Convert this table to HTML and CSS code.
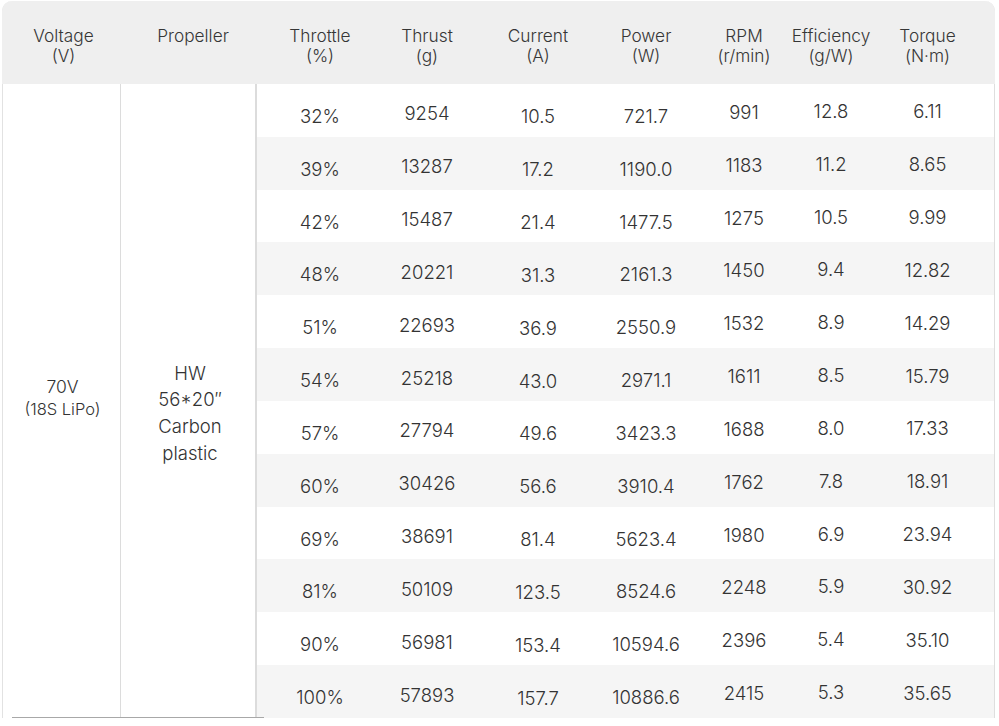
FILE: index.html
```html
<!DOCTYPE html>
<html>
<head>
<meta charset="utf-8">
<link rel="stylesheet" href="styles.css">
</head>
<body>
<div class="wrap">
  <div class="table">
    <div class="hbg"></div>
    <div class="h k1">Voltage<br>(V)</div>
    <div class="h k2">Propeller</div>
    <div class="h k3">Throttle<br>(%)</div>
    <div class="h k4">Thrust<br>(g)</div>
    <div class="h k5">Current<br>(A)</div>
    <div class="h k6">Power<br>(W)</div>
    <div class="h k7">RPM<br>(r/min)</div>
    <div class="h k8">Efficiency<br>(g/W)</div>
    <div class="h k9">Torque<br>(N·m)</div>

    <div class="volt"><span class="v1">70V</span><span class="v2">(18S LiPo)</span></div>
    <div class="prop">HW<br>56*20″<br>Carbon<br>plastic</div>

    <div class="c c1">32%</div><div class="c c2">9254</div><div class="c c3">10.5</div><div class="c c4">721.7</div><div class="c c5">991</div><div class="c c6">12.8</div><div class="c c7">6.11</div>
    <div class="c c1 s">39%</div><div class="c c2 s">13287</div><div class="c c3 s">17.2</div><div class="c c4 s">1190.0</div><div class="c c5 s">1183</div><div class="c c6 s">11.2</div><div class="c c7 s">8.65</div>
    <div class="c c1">42%</div><div class="c c2">15487</div><div class="c c3">21.4</div><div class="c c4">1477.5</div><div class="c c5">1275</div><div class="c c6">10.5</div><div class="c c7">9.99</div>
    <div class="c c1 s">48%</div><div class="c c2 s">20221</div><div class="c c3 s">31.3</div><div class="c c4 s">2161.3</div><div class="c c5 s">1450</div><div class="c c6 s">9.4</div><div class="c c7 s">12.82</div>
    <div class="c c1">51%</div><div class="c c2">22693</div><div class="c c3">36.9</div><div class="c c4">2550.9</div><div class="c c5">1532</div><div class="c c6">8.9</div><div class="c c7">14.29</div>
    <div class="c c1 s">54%</div><div class="c c2 s">25218</div><div class="c c3 s">43.0</div><div class="c c4 s">2971.1</div><div class="c c5 s">1611</div><div class="c c6 s">8.5</div><div class="c c7 s">15.79</div>
    <div class="c c1">57%</div><div class="c c2">27794</div><div class="c c3">49.6</div><div class="c c4">3423.3</div><div class="c c5">1688</div><div class="c c6">8.0</div><div class="c c7">17.33</div>
    <div class="c c1 s">60%</div><div class="c c2 s">30426</div><div class="c c3 s">56.6</div><div class="c c4 s">3910.4</div><div class="c c5 s">1762</div><div class="c c6 s">7.8</div><div class="c c7 s">18.91</div>
    <div class="c c1">69%</div><div class="c c2">38691</div><div class="c c3">81.4</div><div class="c c4">5623.4</div><div class="c c5">1980</div><div class="c c6">6.9</div><div class="c c7">23.94</div>
    <div class="c c1 s">81%</div><div class="c c2 s">50109</div><div class="c c3 s">123.5</div><div class="c c4 s">8524.6</div><div class="c c5 s">2248</div><div class="c c6 s">5.9</div><div class="c c7 s">30.92</div>
    <div class="c c1">90%</div><div class="c c2">56981</div><div class="c c3">153.4</div><div class="c c4">10594.6</div><div class="c c5">2396</div><div class="c c6">5.4</div><div class="c c7">35.10</div>
    <div class="c c1 s">100%</div><div class="c c2 s">57893</div><div class="c c3 s">157.7</div><div class="c c4 s">10886.6</div><div class="c c5 s">2415</div><div class="c c6 s">5.3</div><div class="c c7 s">35.65</div>
  </div>
</div>
</body>
</html>
```

FILE: styles.css
```css
html, body {
  margin: 0;
  padding: 0;
  background: #ffffff;
}
body {
  font-family: "Inter", "Liberation Sans", sans-serif;
  font-weight: 300;
  color: #333333;
}
.wrap {
  padding: 1px 0 0 2px;
}
.table {
  position: relative;
  width: 991px;
  display: grid;
  grid-template-columns: 118px 136px 126px 88px 134px 82px 114px 60px 133px;
  grid-template-rows: 83px repeat(12, 52.83px);
  border-right: 1px solid #dedede;
  border-left: 1px solid #e2e2e2;
  border-radius: 10px 10px 0 0;
}
.table::after {
  content: "";
  position: absolute;
  left: 9px;
  width: 252px;
  bottom: 0;
  height: 1px;
  background: #a8a8a8;
}
.hbg {
  grid-column: 1 / -1;
  grid-row: 1;
  background: #efefef;
  border-radius: 10px 10px 0 0;
  margin: 0 -1px;
}
.h {
  grid-row: 1;
  display: flex;
  align-items: center;
  justify-content: center;
  text-align: center;
  font-size: 17.3px;
  line-height: 20px;
  padding-top: 6px;
  white-space: nowrap;
  color: #363636;
}
.k1 { grid-column: 1; padding-left: 3px; }
.k2 { grid-column: 2; padding-left: 8px; padding-top: 0; padding-bottom: 14px; }
.k3 { grid-column: 3; }
.k4 { grid-column: 4; }
.k5 { grid-column: 5; }
.k6 { grid-column: 6; }
.k7 { grid-column: 7; }
.k8 { grid-column: 8; }
.k9 { grid-column: 9; }
.volt {
  grid-column: 1;
  grid-row: 2 / span 12;
  border-right: 1px solid #dcdcdc;
  display: flex;
  flex-direction: column;
  align-items: center;
  justify-content: center;
  padding-bottom: 5px;
  padding-left: 2px;
}
.v1 {
  font-size: 17.5px;
  line-height: 23px;
}
.v2 {
  font-size: 16.5px;
  line-height: 23px;
}
.prop {
  grid-column: 2;
  grid-row: 2 / span 12;
  border-right: 2px solid #dcdcdc;
  display: flex;
  align-items: center;
  justify-content: center;
  text-align: center;
  font-size: 18.5px;
  line-height: 26.7px;
  padding-top: 24px;
  padding-left: 4px;
}
.c {
  display: flex;
  align-items: center;
  justify-content: center;
  font-size: 18.5px;
  white-space: nowrap;
}
.s {
  background: #f5f5f5;
}
.c1 { padding-top: 11px; }
.c2 { padding-top: 6px; }
.c3 { padding-top: 12px; }
.c4 { padding-top: 11px; }
.c5 { padding-top: 3px; }
.c6 { padding-top: 1px; }
.c7 { padding-top: 2px; }
```
